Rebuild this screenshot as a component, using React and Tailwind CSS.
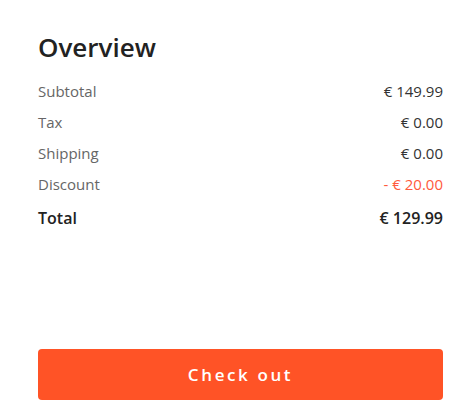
const rows = [
  { label: "Subtotal", value: "€ 149.99" },
  { label: "Tax", value: "€ 0.00" },
  { label: "Shipping", value: "€ 0.00" },
  { label: "Discount", value: "- € 20.00", accent: true },
];

export default function App() {
  return (
    <div
      className="w-[475px] h-[411px] bg-white flex flex-col pl-[38px] pr-[32px] pt-[29px] pb-[11px]"
      style={{ fontFamily: '"Open Sans", "Noto Sans", sans-serif' }}
    >
      <h2 className="text-[26px] leading-[36px] font-semibold text-[#222]">Overview</h2>

      <div className="mt-[11px] flex flex-col">
        {rows.map((r) => (
          <div key={r.label} className="flex justify-between items-center h-[31px] text-[15px]">
            <span className="text-[#666]">{r.label}</span>
            <span className={r.accent ? "text-[#ff5a3c]" : "text-[#333]"}>{r.value}</span>
          </div>
        ))}
        <div className="flex justify-between items-center h-[35px] text-[16px] font-semibold text-[#222]">
          <span>Total</span>
          <span>€ 129.99</span>
        </div>
      </div>

      <div className="flex-1" />

      <button className="h-[51px] w-full rounded-[4px] bg-[#ff5326] text-white text-[17px] font-semibold tracking-[2.6px]">
        Check out
      </button>
    </div>
  );
}
